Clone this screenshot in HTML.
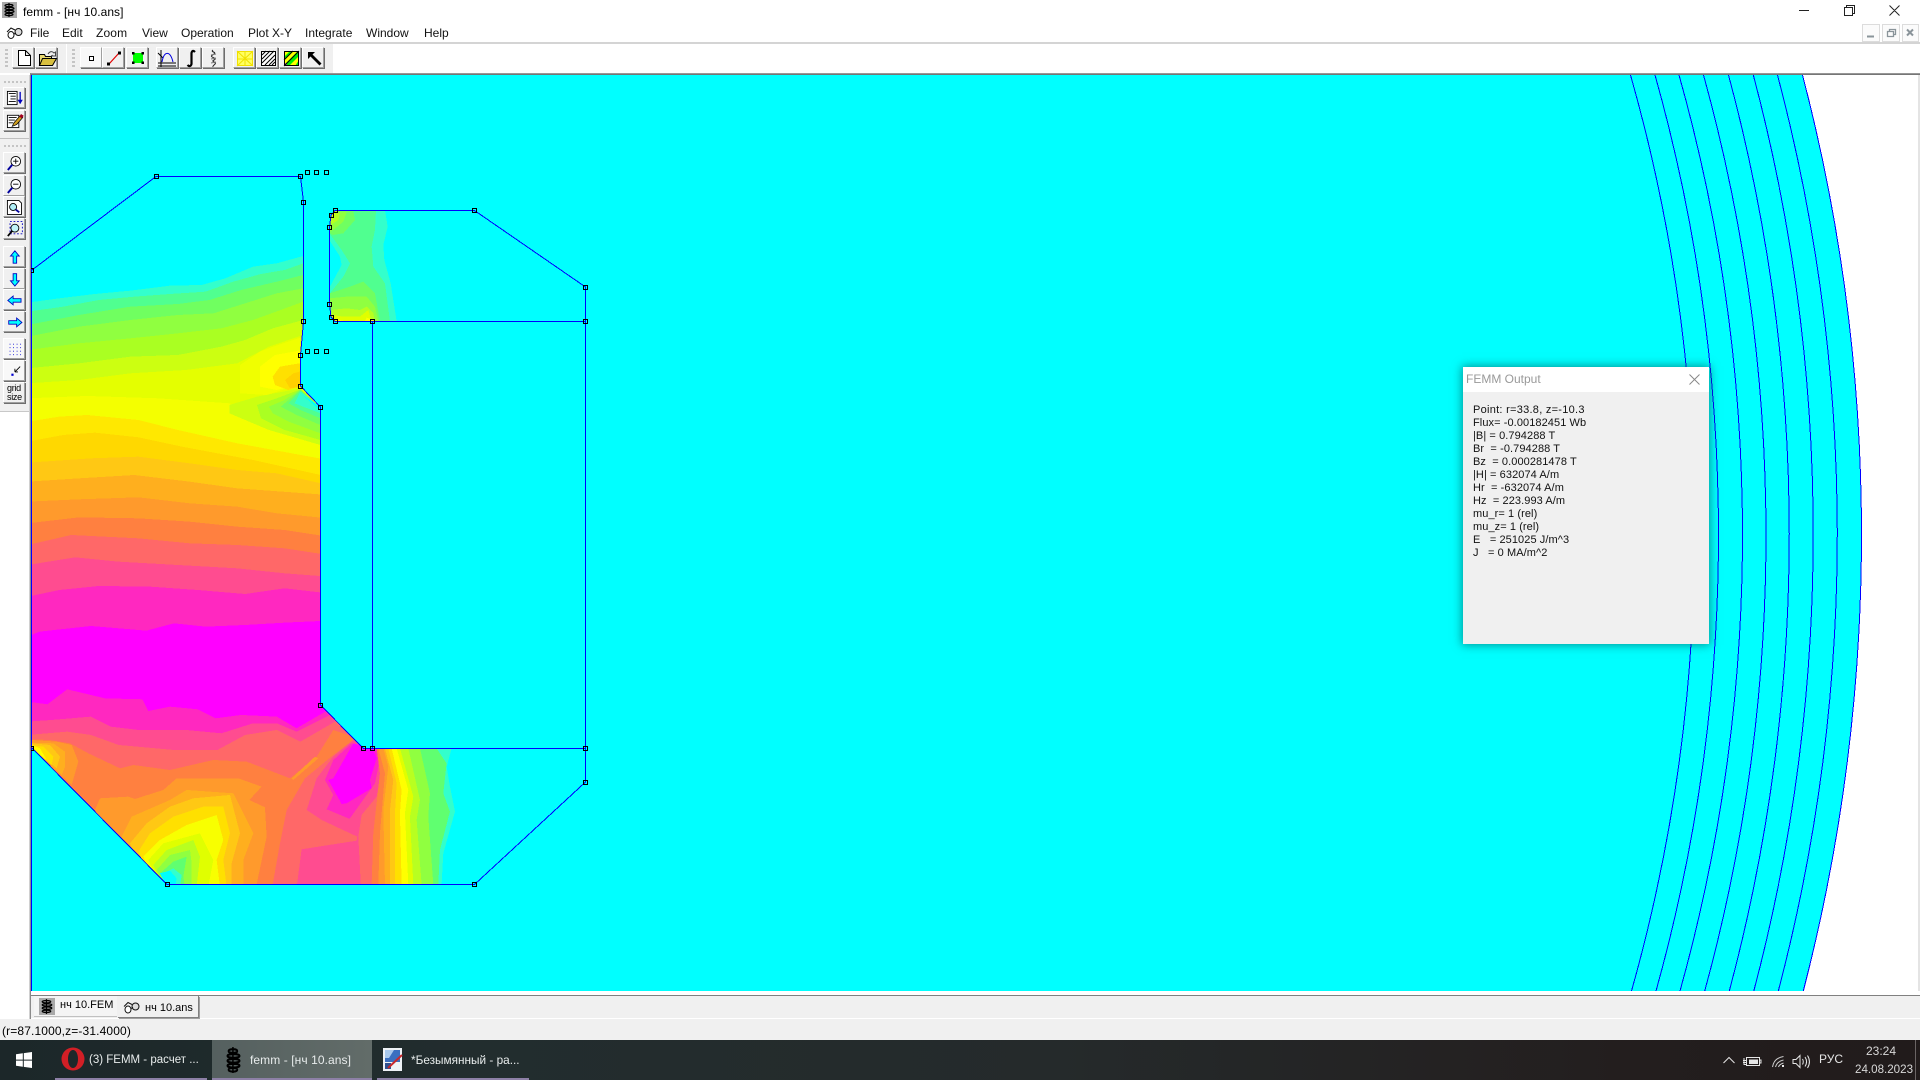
<!DOCTYPE html>
<html><head><meta charset="utf-8"><title>femm</title>
<style>
html,body{margin:0;padding:0;width:1920px;height:1080px;overflow:hidden;background:#fff}
body{font-family:"Liberation Sans","Noto Sans CJK SC",sans-serif;font-size:12px;color:#000;position:relative}
.a{position:absolute;white-space:pre}
.r{position:absolute}
.b{position:absolute;box-sizing:border-box;background:#f0f0f0;border-top:1px solid #fff;border-left:1px solid #fff;border-right:1px solid #a0a0a0;border-bottom:1px solid #a0a0a0;box-shadow:1px 1px 0 #6e6e6e}
.b svg{position:absolute;left:0;top:0}
.h .b{width:22px;height:21px;top:47px;margin-left:-1px}
.v .b{width:22px;height:21px;left:3px;margin-top:-1px}
.v svg{transform:scale(.88);transform-origin:10px 10px}
.m{position:absolute;top:26px;font-size:12px;line-height:14px;color:#111}
.g{position:absolute;width:3px;background-image:repeating-linear-gradient(#c4c4c4 0 2px,transparent 2px 4px)}
.t{position:absolute;top:1040px;height:40px;line-height:40px;color:#e8ecec;font-size:12px;white-space:pre}
.u{position:absolute;top:1078px;height:2px;background:#8d80a6}
</style></head><body>

<!-- canvas -->
<svg class="r" style="left:0;top:0" width="1920" height="1080" viewBox="0 0 1920 1080" shape-rendering="crispEdges">
<defs>
<clipPath id="body"><polygon points="32,270 156,176 300.5,176 303,202 303,321 300.5,355 300.5,386 320,407 320,705 363.4,748 372,748 585,748 585,782 474.5,884 167,884 32,748"/></clipPath>
<clipPath id="cap"><polygon points="335,210 474.5,210 585,287 585,321 335,321 331,317 329.5,304 329.5,227 331,215"/></clipPath>
</defs>
<rect x="32" y="75" width="1886" height="916" fill="#00ffff"/>
<path d="M1802.8,75 A1820 1820 0 0 1 1802.8,991 L1918,991 L1918,75 Z" fill="#fff"/>

<g clip-path="url(#body)">
 <g transform="translate(0,150) scale(.3954,.3333)">
  <polygon fill="#33ffcc" points="70,458 150,445 240,432 330,422 430,407 510,405 570,385 640,350 700,340 767,318 830,318 830,2000 70,2000"/>
  <polygon fill="#50ff90" points="70,485 160,470 250,450 340,440 430,432 520,425 590,395 660,372 720,360 767,340 830,340 830,2000 70,2000"/>
  <polygon fill="#70ff60" points="70,525 200,495 330,470 450,462 530,450 610,420 700,395 767,375 830,375 830,2000 70,2000"/>
  <polygon fill="#90ff40" points="70,560 200,530 330,510 450,495 540,490 620,460 700,430 767,415 830,415 830,2000 70,2000"/>
  <polygon fill="#aaff22" points="70,600 200,580 330,565 450,550 560,535 640,510 710,480 767,455 830,455 830,2000 70,2000"/>
  <polygon fill="#ccff11" points="70,655 200,640 330,620 450,615 560,590 620,570 690,535 767,510 830,510 830,2000 70,2000"/>
  <polygon fill="#e4ff00" points="70,700 200,690 330,670 470,660 600,640 680,590 767,555 830,555 830,2000 70,2000"/>
  <polygon fill="#f4ff00" points="70,745 220,738 400,745 580,760 650,790 830,860 830,2000 70,2000"/>
  <polygon fill="#ffe800" points="70,815 150,800 220,795 350,810 450,840 600,880 830,930 830,2000 70,2000"/>
  <polygon fill="#ffd800" points="70,875 160,855 240,848 350,862 460,890 640,930 830,980 830,2000 70,2000"/>
  <!-- fan below notch -->
  <polygon fill="#ccff11" points="580,765 650,740 760,715 810,772 810,885 680,840 580,790"/>
  <polygon fill="#aaff22" points="650,765 700,745 760,718 810,772 810,870 720,840 660,805"/>
  <polygon fill="#90ff40" points="680,770 720,750 760,718 810,772 810,850 730,815 690,790"/>
  <polygon fill="#70ff60" points="710,770 760,720 810,772 810,825 750,795"/>
  <polygon fill="#50ff90" points="730,760 760,722 810,772 810,805 760,780"/>
  <polygon fill="#33ffcc" points="745,760 760,725 810,772 810,790"/>
  <polygon fill="#00ffff" points="762,732 810,772 810,782"/>
 </g>
 <g transform="translate(200,150) scale(.3333)">
  <polygon fill="#f0ff00" points="120,645 180,605 220,590 310,560 310,700 200,735 120,730"/>
  <polygon fill="#ffff00" points="180,650 225,615 310,600 310,700 230,720 180,710"/>
  <polygon fill="#ffe000" points="218,680 240,650 310,638 310,705 265,720 225,705"/>
  <polygon fill="#ffd000" points="255,690 280,670 310,662 310,710 270,715"/>
 </g>
 <g transform="translate(0,440) scale(.3954,.3333)">
  <polygon fill="#ffc814" points="70,68 230,55 350,50 480,70 600,90 700,100 830,135 830,2000 70,2000"/>
  <polygon fill="#ffaf1e" points="70,125 200,115 340,105 480,125 600,145 830,165 830,2000 70,2000"/>
  <polygon fill="#ff9a2c" points="70,185 200,178 350,172 480,190 600,200 700,220 830,235 830,2000 70,2000"/>
  <polygon fill="#ff8040" points="70,250 200,232 350,235 480,245 600,260 720,270 830,290 830,2000 70,2000"/>
  <polygon fill="#ff6868" points="70,315 180,285 350,295 480,310 600,315 720,325 830,345 830,2000 70,2000"/>
  <polygon fill="#ff4c90" points="70,375 190,352 300,365 450,375 600,385 720,400 830,410 830,2000 70,2000"/>
  <polygon fill="#ff28c0" points="70,470 150,450 250,438 380,440 500,450 620,462 720,445 830,460 830,2000 70,2000"/>
  <polygon fill="#ff00ff" points="70,590 100,575 230,558 370,572 440,550 520,560 620,555 720,548 830,542 830,2000 70,2000"/>
  <polygon fill="#ff28c0" points="70,785 120,793 170,748 265,775 360,778 375,813 430,800 500,808 545,835 610,825 700,830 750,865 830,810 900,810 1800,810 1800,2000 70,2000"/>
  <polygon fill="#ff4c90" points="70,845 130,840 230,830 280,860 350,870 470,870 560,880 640,850 700,850 750,875 835,825 900,825 1800,825 1800,2000 70,2000"/>
  <polygon fill="#ff6868" points="70,885 170,875 230,885 300,915 440,930 550,930 620,885 700,870 760,905 840,850 870,830 1800,830 1800,2000 70,2000"/>
 </g>
 <g transform="translate(0,700) scale(.3333)">
  <polygon fill="#ff8040" points="95,118 150,120 210,130 265,160 360,205 400,195 510,210 640,180 740,185 870,235 950,170 1000,90 1060,110 1075,130 1500,130 1500,700 95,700"/>
  <!-- left hot spot -->
  <polygon fill="#ff9a2c" points="95,120 170,125 215,135 235,185 215,255 95,145"/>
  <polygon fill="#ffaf1e" points="95,128 160,130 195,155 195,200 185,225 95,145"/>
  <polygon fill="#ffc814" points="95,130 150,135 180,170 170,205 95,145"/>
  <polygon fill="#ffe000" points="95,135 130,140 160,170 155,195 95,145"/>
  <polygon fill="#ffff00" points="95,135 120,145 140,180 95,145"/>
  <!-- nested spot -->
  <polygon fill="#ff9a2c" points="285,330 300,295 385,290 405,297 490,270 530,235 600,235 715,235 785,260 748,300 795,322 800,410 770,553 400,553 350,490"/>
  <polygon fill="#ff9a2c" points="875,235 945,170 955,175 880,240"/>
  <polygon fill="#ffaf1e" points="360,420 395,350 510,300 560,270 700,280 760,400 730,480 730,560 420,560"/>
  <polygon fill="#ffc814" points="390,430 440,370 510,320 580,295 690,285 720,400 695,490 695,560 440,560"/>
  <polygon fill="#ffe000" points="415,455 450,400 520,350 610,320 670,320 690,400 670,480 680,560 460,560"/>
  <polygon fill="#f8ff00" points="430,470 480,420 560,375 650,345 670,420 650,480 660,560 470,560"/>
  <polygon fill="#e0ff00" points="445,480 490,430 600,400 640,480 625,560 480,560"/>
  <polygon fill="#b8ff20" points="460,495 500,450 580,420 600,470 590,560 490,560"/>
  <polygon fill="#90ff40" points="470,510 510,465 570,450 575,490 575,560 495,560"/>
  <polygon fill="#60ff70" points="480,520 520,485 560,470 550,530 555,560 500,560"/>
  <polygon fill="#33ffcc" points="490,520 520,505 545,525 540,560 500,560"/>
  <polygon fill="#00ffff" points="480,520 510,512 530,535 525,560 500,560"/>
  <!-- right pinks -->
  <polygon fill="#ff6868" points="860,330 915,235 1000,165 1060,120 1130,145 1170,600 810,600 840,430"/>
  <polygon fill="#ff4c90" points="950,235 1000,170 1060,120 1130,145 1150,180 1130,290 1085,345 1075,410 1085,600 885,600 905,448 965,360 920,330"/>
  <polygon fill="#ff6868" points="965,360 1072,410 1070,422 905,448"/>
  <polygon fill="#ff28c0" points="1000,180 1055,130 1130,145 1140,175 1125,250 1050,355 1045,355 980,328 1000,285 975,240"/>
  <polygon fill="#ff00ff" points="1000,235 1060,130 1120,145 1130,175 1110,240 1115,265 1040,310 1025,312 985,240"/>
  <!-- right strips -->
  <polygon fill="#ff8040" points="1130,145 1140,220 1120,400 1115,553 1500,553 1500,145"/>
  <polygon fill="#ff9a2c" points="1135,145 1155,220 1140,400 1135,553 1500,553 1500,145"/>
  <polygon fill="#ffaf1e" points="1150,145 1165,200 1150,330 1155,553 1500,553 1500,145"/>
  <polygon fill="#ffc814" points="1155,145 1180,240 1170,330 1170,553 1500,553 1500,145"/>
  <polygon fill="#ffe000" points="1165,145 1190,250 1185,340 1185,553 1500,553 1500,145"/>
  <polygon fill="#ffff00" points="1175,145 1205,270 1200,340 1205,553 1500,553 1500,145"/>
  <polygon fill="#e0ff00" points="1190,145 1225,270 1215,340 1225,553 1500,553 1500,145"/>
  <polygon fill="#b8ff20" points="1200,145 1240,290 1230,350 1240,553 1500,553 1500,145"/>
  <polygon fill="#90ff40" points="1225,145 1260,300 1250,360 1265,553 1500,553 1500,145"/>
  <polygon fill="#60ff70" points="1260,145 1290,280 1285,350 1300,553 1500,553 1500,145"/>
  <polygon fill="#33ffcc" points="1310,145 1340,190 1330,280 1350,335 1320,450 1315,553 1500,553 1500,145"/>
  <polygon fill="#00ffff" points="1355,145 1340,200 1350,260 1365,335 1330,460 1325,553 1800,553 1800,145"/>
 </g>
</g>

<g clip-path="url(#cap)">
 <g transform="translate(200,150) scale(.3333)">
  <polygon fill="#33ffcc" points="388,181 555,181 563,230 550,285 553,330 572,400 590,514 388,514"/>
  <polygon fill="#50ff90" points="388,181 528,181 525,240 515,290 520,350 555,400 570,514 388,514"/>
  <polygon fill="#33ffcc" points="388,250 425,300 450,340 430,380 390,430"/>
  <polygon fill="#00ffff" points="388,270 420,320 425,345 390,410"/>
  <polygon fill="#70ff60" points="388,181 460,181 465,210 430,250 400,255 388,250"/>
  <polygon fill="#70ff60" points="390,430 450,410 490,395 525,430 540,514 388,514"/>
  <polygon fill="#90ff40" points="388,185 440,185 430,215 400,240 388,245"/>
  <polygon fill="#b8ff20" points="388,185 420,190 415,210 392,225"/>
  <polygon fill="#e0ff00" points="388,181 410,181 400,205"/>
  <polygon fill="#90ff40" points="390,445 440,440 500,440 525,470 535,514 400,514"/>
  <polygon fill="#b8ff20" points="395,480 440,475 480,480 500,470 520,490 525,514 395,514"/>
  <polygon fill="#e0ff00" points="395,495 430,500 480,500 505,480 515,514 395,514"/>
  <polygon fill="#ffff00" points="395,503 435,514 395,514"/>
  <polygon fill="#ffff00" points="500,503 530,514 495,514"/>
 </g>
</g>

<!-- arcs -->
<g fill="none" stroke="#0000ff" stroke-width="1">
 <path d="M1630.5,75 A1682 1682 0 0 1 1631.5,991"/>
 <path d="M1655,75 A1697 1697 0 0 1 1656,991"/>
 <path d="M1679,75 A1697 1697 0 0 1 1680,991"/>
 <path d="M1703.5,75 A1726 1726 0 0 1 1704.7,991"/>
 <path d="M1728.5,75 A1768 1768 0 0 1 1729.3,991"/>
 <path d="M1753.3,75 A1788 1788 0 0 1 1753.8,991"/>
 <path d="M1777.5,75 A1796 1796 0 0 1 1778.3,991"/>
 <path d="M1802.5,75 A1820 1820 0 0 1 1803.3,991"/>
</g>
<!-- geometry -->
<g fill="none" stroke="#0000ff" stroke-width="1">
 <path d="M31.5,75 V991"/>
 <path d="M32,270 L156,176.5 H300.5 L303.5,202 V321.5 L300.5,355 V386 L320.5,407 V705 L363.4,748.5 H585.5 V782 L474.5,884.5 H167 L32,748"/>
 <path d="M335,210.5 H474.5 L585.5,287 V321.5 H335 L331,317 L329.5,304 V227 L331,215 Z"/>
 <path d="M372.5,321 V748"/>
 <path d="M585.5,321 V748"/>
</g>
<path fill="none" stroke="#000" stroke-width="1" d="M154.5,174.5h4v4h-4zM298.5,174.5h4v4h-4zM301.5,200.5h4v4h-4zM301.5,319.5h4v4h-4zM298.5,353.5h4v4h-4zM298.5,384.5h4v4h-4zM318.5,405.5h4v4h-4zM30.5,268.5h3v4h-3zM333.5,208.5h4v4h-4zM329.5,213.5h4v4h-4zM327.5,225.5h4v4h-4zM327.5,302.5h4v4h-4zM329.5,315.5h4v4h-4zM333.5,319.5h4v4h-4zM370.5,319.5h4v4h-4zM472.5,208.5h4v4h-4zM583.5,285.5h4v4h-4zM583.5,319.5h4v4h-4zM305.5,170.5h4v4h-4zM314.5,170.5h4v4h-4zM324.5,170.5h4v4h-4zM305.5,349.5h4v4h-4zM314.5,349.5h4v4h-4zM324.5,349.5h4v4h-4zM318.5,703.5h4v4h-4zM361.5,746.5h4v4h-4zM370.5,746.5h4v4h-4zM583.5,746.5h4v4h-4zM583.5,780.5h4v4h-4zM472.5,882.5h4v4h-4zM165.5,882.5h4v4h-4zM30.5,746.5h3v4h-3z"/>
</svg>

<!-- frame -->
<div class="r" style="left:30px;top:73px;width:1890px;height:2px;background:linear-gradient(#a8a8a8,#666)"></div>
<div class="r" style="left:1918px;top:75px;width:2px;height:916px;background:#e4e4e4"></div>
<div class="r" style="left:30px;top:73px;width:1px;height:946px;background:#8a8a8a"></div>
<div class="r" style="left:29px;top:75px;width:1px;height:944px;background:#d0d0d0"></div>

<!-- title -->
<div class="r" style="left:0;top:0;width:1920px;height:42px;background:#fff"></div>
<div class="r" style="left:2px;top:2px;width:15px;height:16px;background:#a9a9a9"></div>
<svg class="r" style="left:2px;top:2px" width="15" height="16" viewBox="0 0 15 16" fill="none" stroke="#000" stroke-width="1.2"><path d="M7 1V15M3 3.500c0-1.500 8-1.500 8 0s-8 1.500-8 0M3 6.500c0-1.500 9-1.500 9 0s-9 1.500-9 0M3 9.500c0-1.500 9-1.500 9 0s-9 1.500-9 0M3 12.500c0-1.500 8-1.500 8 0s-8 1.500-8 0"/></svg>
<div class="a" style="left:23px;top:5px;font-size:12px;line-height:15px;letter-spacing:.05px">femm - [нч 10.ans]</div>
<svg class="r" style="left:1790px;top:0" width="130" height="22" fill="none" stroke="#222"><path d="M9 10.500H19M54.500 7.500h8v8h-8zM56.500 7.500v-2h8v8h-2M99.500 5.500l10 10M109.500 5.500l-10 10"/></svg>

<!-- menu -->
<svg class="r" style="left:6px;top:26px" width="18" height="14" viewBox="0 0 18 14" fill="#fff" stroke="#111" stroke-width="1"><path d="M1 6L5 2L9 4" fill="none"/><ellipse cx="5" cy="9" rx="3" ry="3.500"/><ellipse cx="12.500" cy="6" rx="3.500" ry="3.500" fill="#ddd"/><path d="M8 8l2-1" fill="none"/></svg>
<div class="m" style="left:30px">File</div><div class="m" style="left:62px">Edit</div><div class="m" style="left:96px;letter-spacing:.15px">Zoom</div><div class="m" style="left:142px">View</div><div class="m" style="left:181px">Operation</div><div class="m" style="left:248px">Plot X-Y</div><div class="m" style="left:305px">Integrate</div><div class="m" style="left:366px">Window</div><div class="m" style="left:424px">Help</div>
<svg class="r" style="left:1860px;top:22px" width="60" height="21"><g fill="#fbfbfb" stroke="#dcdcdc"><rect x="2.500" y="2.500" width="17" height="17"/><rect x="22.500" y="2.500" width="17" height="17"/><rect x="42.500" y="2.500" width="16" height="17"/></g><path d="M7 14.500h7" stroke="#8a949a" stroke-width="2"/><path d="M27.500 9.500h6v5h-6zM29.500 9.500v-2h6v5h-2" fill="none" stroke="#8a949a" stroke-width="1.300"/><path d="M47 7.500l6 6M53 7.500l-6 6" stroke="#8a949a" stroke-width="2"/></svg>

<!-- top toolbar -->
<div class="r" style="left:0;top:42px;width:1920px;height:2px;background:#d4d4d4"></div>
<div class="r" style="left:0;top:44px;width:333px;height:29px;background:#f0f0f0"></div>
<div class="g" style="left:5px;top:49px;height:20px"></div><div class="g" style="left:72px;top:49px;height:20px"></div>
<div class="r" style="left:66px;top:44px;width:1px;height:29px;background:#fff"></div>
<div class="h">
<div class="b" style="left:13px"><svg width="22" height="21" fill="#fff" stroke="#000"><path d="M5.500 2.500h7l5 5v10h-12zM12.500 2.500v5h5"/></svg></div>
<div class="b" style="left:36px"><svg width="22" height="21" stroke="#000"><path d="M3.500 17.500v-11h5l1 2h6v2" fill="#e8d870"/><path d="M3.500 17.500l3-7h14l-4 7z" fill="#d8c040"/><path d="M12 6c2-3 4-3 6-1l1.500-1v4h-4l1-1" fill="none" stroke="#444"/></svg></div>
<div class="b" style="left:81px;background:#f8f8f8"><svg width="22" height="21"><rect x="8.500" y="8.500" width="4" height="4" fill="#fff" stroke="#000"/></svg></div>
<div class="b" style="left:103px"><svg width="22" height="21"><path d="M6 16L16 5" stroke="#e00000" stroke-width="1.200"/><rect x="4" y="14.500" width="3" height="3" fill="#000"/><rect x="15" y="3.500" width="3" height="3" fill="#000"/></svg></div>
<div class="b" style="left:127px"><svg width="22" height="21"><rect x="6" y="5" width="10" height="10" fill="#00ff00"/><path d="M5 4h2.500v2.500H5zM14.500 4H17v2.500h-2.500zM5 13.500h2.500V16H5zM14.500 13.500H17V16h-2.500z" fill="#000"/></svg></div>
<div class="b" style="left:157px"><svg width="22" height="21" fill="none"><path d="M4 2v17M1 15H19M1 18H19" stroke="#000"/><path d="M1 5l5 5" stroke="#000"/><path d="M5 14C7 3 13 2 16 14" stroke="#0000e0"/></svg></div>
<div class="b" style="left:180px"><svg width="22" height="21" fill="none" stroke="#000" stroke-width="2.200"><path d="M15 4c-2-2-3-1-3.500 1v11c-.5 2-2 3-4 1"/></svg></div>
<div class="b" style="left:203px"><svg width="22" height="21" fill="none" stroke="#222"><path d="M10 2c-3 2 4 2 1 4s-4 2 0 4-4 2 0 4-2 3-1 5"/><path d="M8 7l5-1M8 11l5-1M8 15l5-1" stroke="#777"/></svg></div>
<div class="b" style="left:234px"><svg width="22" height="21"><rect x="3.500" y="3.500" width="15" height="14" fill="#ffff60" stroke="#f0e000"/><path d="M11 3v15M3 11h16M3 3l16 15M19 3L3 18" stroke="#f0e000" fill="none"/></svg></div>
<div class="b" style="left:257px"><svg width="22" height="21"><rect x="4.500" y="3.500" width="14" height="14" fill="#fff" stroke="#000"/><path d="M5 7l4-4M5 11l8-8M5 15l12-12M8 17L18 7M12 17l6-6M15 17l3-3" stroke="#000" fill="none"/></svg></div>
<div class="b" style="left:280px"><svg width="22" height="21"><rect x="4" y="3" width="15" height="15" fill="#00ee00"/><path d="M4 3h6L4 9z" fill="#ffff00"/><path d="M15 18h-6l10-10v4z" fill="#ffff00"/><path d="M4 11L12 3h2L4 14zM4 18L19 3" fill="none"/><path d="M4 12L13 3h5L4 17z" fill="#ffff00"/><path d="M4 14l4 4H4z" fill="#ff00ff"/><path d="M4 12L13 3M4 18L19 3" stroke="#000" fill="none"/><rect x="4.500" y="3.500" width="14" height="14" fill="none" stroke="#000"/></svg></div>
<div class="b" style="left:303px"><svg width="22" height="21"><path d="M5 4h7l-2.500 2.500 9 9-2 2-9-9L5 11z" fill="#000"/></svg></div>
</div>

<!-- left toolbar -->
<div class="r" style="left:0;top:75px;width:29px;height:336px;background:#f0f0f0;border-bottom:1px solid #c8c8c8"></div>
<div class="r" style="left:4px;top:81px;width:22px;height:2px;background-image:repeating-linear-gradient(90deg,#c4c4c4 0 2px,transparent 2px 4px)"></div>
<div class="r" style="left:0;top:138px;width:29px;height:1px;background:#c0c0c0"></div>
<div class="r" style="left:4px;top:145px;width:22px;height:2px;background-image:repeating-linear-gradient(90deg,#c4c4c4 0 2px,transparent 2px 4px)"></div>
<div class="v">
<div class="b" style="top:88px"><svg width="22" height="21"><rect x="2.500" y="2.500" width="11" height="15" fill="#fff" stroke="#000"/><path d="M4 5h8M6 8h6M6 11h6M4 14h8" stroke="#000"/><path d="M17 3v13" stroke="#0000c0" stroke-width="1.500"/><path d="M14 12l3 5 3-5z" fill="#0000c0"/></svg></div>
<div class="b" style="top:111px"><svg width="22" height="21"><rect x="2.500" y="3.500" width="13" height="14" fill="#fff" stroke="#000"/><path d="M4 6h9M4 9h7M4 12h5" stroke="#000"/><path d="M8 16l2-4 7-8 3 2-7 8z" fill="#d0a020" stroke="#000" stroke-width=".8"/><path d="M16 5l2-3 3 2-2 3z" fill="#a00020"/></svg></div>
<div class="b" style="top:153px"><svg width="22" height="21" fill="none"><circle cx="12" cy="8" r="5.500" stroke="#000" fill="#fff"/><path d="M9 8h6M12 5v6" stroke="#000"/><path d="M8 12l-5 6" stroke="#00009c" stroke-width="2.200"/></svg></div>
<div class="b" style="top:176px"><svg width="22" height="21" fill="none"><circle cx="12" cy="8" r="5.500" stroke="#000" fill="#fff"/><path d="M9 8h6" stroke="#000"/><path d="M8 12l-5 6" stroke="#00009c" stroke-width="2.200"/></svg></div>
<div class="b" style="top:197px"><svg width="22" height="21" fill="none"><path d="M2.500 2.500h13l3 3v13h-16z" stroke="#000" fill="#fff"/><circle cx="9" cy="10" r="4" stroke="#000" fill="#b0f0f8"/><path d="M12 13l4 3" stroke="#00009c" stroke-width="2"/></svg></div>
<div class="b" style="top:219px"><svg width="22" height="21" fill="none"><rect x="5.500" y="1.500" width="14" height="14" stroke="#0000c0" stroke-dasharray="2 2"/><circle cx="11" cy="9" r="4.500" stroke="#000" fill="#c0f4f8"/><path d="M8 12l-5 6" stroke="#000" stroke-width="2"/></svg></div>
<div class="b" style="top:247px"><svg width="22" height="21"><path d="M11 3l5 6H13v8H9V9H6z" fill="#00ffff" stroke="#0000c0"/></svg></div>
<div class="b" style="top:269px"><svg width="22" height="21"><path d="M11 18l5-6H13V4H9v8H6z" fill="#00ffff" stroke="#0000c0"/></svg></div>
<div class="b" style="top:290px"><svg width="22" height="21"><path d="M3 10.500l6-5v3h9v4H9v3z" fill="#00ffff" stroke="#0000c0"/></svg></div>
<div class="b" style="top:312px"><svg width="22" height="21"><path d="M19 10.500l-6-5v3H4v4h9v3z" fill="#00ffff" stroke="#0000c0"/></svg></div>
<div class="b" style="top:339px;background:#f8f8f8"><svg width="22" height="21" fill="#0000d0"><path d="M5 4h1v1H5zM9 4h1v1H9zM13 4h1v1h-1zM17 4h1v1h-1zM5 8h1v1H5zM9 8h1v1H9zM13 8h1v1h-1zM17 8h1v1h-1zM5 12h1v1H5zM9 12h1v1H9zM13 12h1v1h-1zM17 12h1v1h-1zM5 16h1v1H5zM9 16h1v1H9zM13 16h1v1h-1zM17 16h1v1h-1z"/></svg></div>
<div class="b" style="top:361px;background:#f8f8f8"><svg width="22" height="21"><rect x="7" y="13" width="2.500" height="2.500" fill="#0000d0"/><path d="M11 11l6-6M11 11v-3.500M11 11h3.500" stroke="#000" fill="none"/></svg></div>
<div class="b" style="top:383px"><div class="a" style="left:3px;top:1px;font-size:9px;line-height:9px;letter-spacing:-.3px;color:#000">grid
size</div></div>
</div>

<!-- dialog -->
<div class="r" style="left:1463px;top:367px;width:246px;height:277px;background:#f0f0f0;box-shadow:0 0 9px 1px rgba(0,90,90,.65)"></div>
<div class="r" style="left:1463px;top:367px;width:246px;height:25px;background:#fff"></div>
<div class="a" style="left:1466px;top:372px;font-size:12px;line-height:15px;color:#999">FEMM Output</div>
<svg class="r" style="left:1689px;top:374px" width="11" height="11" stroke="#888"><path d="M.5.500l10 10M10.500.500l-10 10"/></svg>
<div class="a" style="left:1473px;top:404px;font-size:11px;line-height:13px;color:#111;letter-spacing:.08px"><span style="letter-spacing:.27px">Point: r=33.8, z=-10.3</span>
Flux= -0.00182451 Wb
|B| = 0.794288 T
Br  = -0.794288 T
Bz  = 0.000281478 T
|H| = 632074 A/m
Hr  = -632074 A/m
Hz  = 223.993 A/m
mu_r= 1 (rel)
mu_z= 1 (rel)
E   = 251025 J/m^3
J   = 0 MA/m^2</div>

<!-- tabs + status -->
<div class="r" style="left:31px;top:991px;width:1889px;height:4px;background:#fff"></div>
<div class="r" style="left:31px;top:995px;width:1889px;height:24px;background:#f0f0f0;border-top:1px solid #808080;box-sizing:border-box"></div>
<div class="r" style="left:31px;top:1018px;width:1889px;height:1px;background:#fff"></div>
<div class="r" style="left:118px;top:996px;width:81px;height:22px;background:#f0f0f0;border-right:1px solid #808080;border-bottom:1px solid #808080;box-sizing:border-box;box-shadow:1px 1px 0 #a0a0a0"></div>
<div class="r" style="left:34px;top:996px;width:83px;height:21px;background:#f4f4f4;border-bottom:1px solid #c0c0c0;box-sizing:border-box"></div>
<div class="r" style="left:39px;top:998px;width:16px;height:17px;background:#a9a9a9"></div>
<svg class="r" style="left:39px;top:998px" width="16" height="17" viewBox="0 0 15 16" fill="none" stroke="#000" stroke-width="1.200"><path d="M7 1V15M3 3.500c0-1.500 8-1.500 8 0s-8 1.500-8 0M3 6.500c0-1.500 9-1.500 9 0s-9 1.500-9 0M3 9.500c0-1.500 9-1.500 9 0s-9 1.500-9 0M3 12.500c0-1.500 8-1.500 8 0s-8 1.500-8 0"/></svg>
<div class="a" style="left:60px;top:998px;font-size:11px;line-height:15px">нч 10.FEM</div>
<svg class="r" style="left:123px;top:1000px" width="18" height="15" viewBox="0 0 18 14" fill="#fff" stroke="#111"><path d="M1 6L5 2L9 4" fill="none"/><ellipse cx="5" cy="9" rx="3" ry="3.500"/><ellipse cx="12.500" cy="6" rx="3.500" ry="3.500" fill="#ddd"/><path d="M8 8l2-1" fill="none"/></svg>
<div class="a" style="left:145px;top:1001px;font-size:11px;line-height:15px">нч 10.ans</div>
<div class="r" style="left:0;top:1019px;width:1920px;height:21px;background:#f0f0f0"></div>
<div class="a" style="left:2px;top:1024px;font-size:12px;line-height:14px;letter-spacing:.13px">(r=87.1000,z=-31.4000)</div>

<!-- taskbar -->
<div class="r" style="left:0;top:1040px;width:1920px;height:40px;background:linear-gradient(90deg,#1c2729 0,#222d2e 25%,#252a2b 55%,#231e1e 85%,#211b1b 100%)"></div>
<div class="r" style="left:212px;top:1040px;width:160px;height:40px;background:linear-gradient(90deg,#55605f,#626c69)"></div>
<div class="u" style="left:55px;width:152px"></div><div class="u" style="left:212px;width:160px"></div><div class="u" style="left:377px;width:152px"></div>
<svg class="r" style="left:16px;top:1052px" width="16" height="16" fill="#fff"><path d="M0 2.300L6.800 1.300V7.600H0zM7.800 1.100L16 0V7.600H7.800zM0 8.600H6.800V14.800L0 13.800zM7.800 8.600H16V16L7.800 14.900z"/></svg>
<svg class="r" style="left:61px;top:1047px" width="24" height="24"><path fill-rule="evenodd" fill="#d21f26" d="M12 .5A11.500 11.500 0 1 0 12 23.500A11.500 11.500 0 1 0 12 .5zM12 3c3 0 5 4 5 9s-2 9-5 9-5-4-5-9 2-9 5-9z"/></svg>
<div class="t" style="left:89px;font-size:11.5px">(3) FEMM - расчет ...</div>
<svg class="r" style="left:225px;top:1047px" width="17" height="26" viewBox="0 0 15 16" preserveAspectRatio="none" fill="none" stroke="#000" stroke-width="1.300"><path d="M7 0V16M3 2.500c0-1.500 8-1.500 8 0s-8 1.500-8 0M2 5.500c0-1.500 11-1.500 11 0s-11 1.500-11 0M2 8.500c0-1.500 11-1.500 11 0s-11 1.500-11 0M2 11.500c0-1.500 11-1.500 11 0s-11 1.500-11 0M3 14c0-1.500 8-1.500 8 0s-8 1.500-8 0"/></svg>
<div class="t" style="left:250px;letter-spacing:.08px">femm - [нч 10.ans]</div>
<svg class="r" style="left:383px;top:1048px" width="20" height="23"><rect width="19" height="23" fill="#eef2f6"/><rect x="2" y="2" width="15" height="12" fill="#3a6fc0"/><path d="M2 2h9l-5 8H2z" fill="#a8c8ec"/><rect x="2" y="15" width="6" height="6" fill="#305090"/><path d="M5 20L19 7" stroke="#c8282c" stroke-width="2"/></svg>
<div class="t" style="left:411px;font-size:11.8px">*Безымянный - ра...</div>

<!-- tray -->
<svg class="r" style="left:1720px;top:1050px" width="95" height="22" fill="none" stroke="#e6e6e6"><path d="M3.500 13L9 7.500 14.500 13"/><path d="M26.500 7.500h13v8h-13zM39.500 10v3h1.500v-3z"/><rect x="29" y="9.500" width="9" height="4.500" fill="#e6e6e6" stroke="none"/><path d="M23 10.500h3M23 12.500h3M24 8v6.500h2" stroke-width="1"/><path d="M52.500 17c1-6 5-9.500 11-10.500M55.500 17c1-3.500 3.500-6 8-7M58.500 17c.5-2 2-3 5-4" stroke="#cfcfcf"/><rect x="62" y="15" width="2" height="2" fill="#e6e6e6" stroke="none"/><path d="M73 9.500h3l4-4v12l-4-4h-3zM82.500 9c1 1.500 1 4 0 5.500M85 7c2 3 2 6.500 0 9.500M87.500 5.500c2.500 4 2.500 8.500 0 12.500"/></svg>
<div class="a" style="left:1819px;top:1052px;color:#e6e6e6;font-size:12px;line-height:15px">РУС</div>
<div class="a" style="left:1865px;top:1044px;width:32px;text-align:center;color:#d8d8d8;font-size:12px;line-height:15px">23:24</div>
<div class="a" style="left:1855px;top:1062px;width:52px;text-align:center;color:#d8d8d8;font-size:11.6px;line-height:15px">24.08.2023</div>
<div class="r" style="left:1915px;top:1040px;width:1px;height:40px;background:#6a6464"></div>
</body></html>
